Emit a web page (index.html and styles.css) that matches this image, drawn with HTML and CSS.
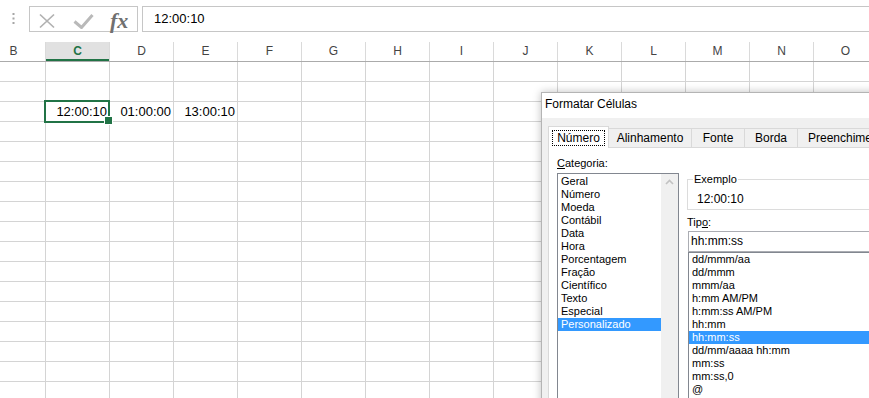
FILE: index.html
```html
<!DOCTYPE html>
<html lang="pt-BR">
<head>
    <meta charset="UTF-8">
    <meta name="viewport" content="width=device-width, initial-scale=1.0">
    <title>Formatar Células</title>
    <link rel="stylesheet" href="styles.css">
</head>
<body>
    <!-- Formula bar -->
    <div class="formula-bar">
        <div class="grip">
            <svg width="3" height="11" viewBox="0 0 3 11">
                <rect x="0.5" y="0" width="2" height="2" fill="#a6a6a6"/>
                <rect x="0.5" y="4.5" width="2" height="2" fill="#a6a6a6"/>
                <rect x="0.5" y="9" width="2" height="2" fill="#a6a6a6"/>
            </svg>
        </div>
        <div class="fx-tools">
            <svg class="tool-cancel" width="18" height="16" viewBox="0 0 18 16">
                <path d="M2 1.5 L16 14.5 M16 1.5 L2 14.5" stroke="#b1b1b1" stroke-width="1.7" fill="none"/>
            </svg>
            <svg class="tool-enter" width="21" height="16" viewBox="0 0 21 16">
                <path d="M1.5 8.5 L8.5 14.5 L19.5 2" stroke="#b9b9b9" stroke-width="3" fill="none"/>
            </svg>
            <span class="fx">fx</span>
        </div>
        <div class="formula-input">12:00:10</div>
    </div>

    <!-- Column headers -->
    <div class="col-headers">
        <div class="col-head">B</div>
        <div class="col-head active">C</div>
        <div class="col-head">D</div>
        <div class="col-head">E</div>
        <div class="col-head">F</div>
        <div class="col-head">G</div>
        <div class="col-head">H</div>
        <div class="col-head">I</div>
        <div class="col-head">J</div>
        <div class="col-head">K</div>
        <div class="col-head">L</div>
        <div class="col-head">M</div>
        <div class="col-head">N</div>
        <div class="col-head">O</div>
    </div>

    <!-- Cells -->
    <div class="grid">
        <div class="data-row">
            <div class="cell"></div>
            <div class="cell selected">12:00:10</div>
            <div class="cell">01:00:00</div>
            <div class="cell">13:00:10</div>
        </div>
    </div>

    <!-- Format Cells dialog -->
    <div class="dialog">
        <div class="dialog-title">Formatar Células</div>
        <div class="tabs">
            <div class="tab tab-numero active"><span class="focus">Número</span></div>
            <div class="tab tab-alinhamento">Alinhamento</div>
            <div class="tab tab-fonte">Fonte</div>
            <div class="tab tab-borda">Borda</div>
            <div class="tab tab-preench">Preenchimento</div>
        </div>
        <div class="tab-panel">
            <div class="category-col">
                <div class="label"><u>C</u>ategoria:</div>
                <div class="listbox category-list">
                    <ul class="items">
                        <li>Geral</li>
                        <li>Número</li>
                        <li>Moeda</li>
                        <li>Contábil</li>
                        <li>Data</li>
                        <li>Hora</li>
                        <li>Porcentagem</li>
                        <li>Fração</li>
                        <li>Científico</li>
                        <li>Texto</li>
                        <li>Especial</li>
                        <li class="selected">Personalizado</li>
                    </ul>
                    <div class="scrollbar">
                        <svg width="9" height="6" viewBox="0 0 9 6">
                            <path d="M1 5 L4.5 1.5 L8 5" stroke="#c2c2c2" stroke-width="1.6" fill="none"/>
                        </svg>
                    </div>
                </div>
            </div>
            <div class="type-col">
                <fieldset class="example">
                    <legend>Exemplo</legend>
                    <div class="example-value">12:00:10</div>
                </fieldset>
                <div class="label tipo-label">Tip<u>o</u>:</div>
                <div class="type-input">hh:mm:ss</div>
                <ul class="listbox type-list">
                    <li>dd/mmm/aa</li>
                    <li>dd/mmm</li>
                    <li>mmm/aa</li>
                    <li>h:mm AM/PM</li>
                    <li>h:mm:ss AM/PM</li>
                    <li>hh:mm</li>
                    <li class="selected">hh:mm:ss</li>
                    <li>dd/mm/aaaa hh:mm</li>
                    <li>mm:ss</li>
                    <li>mm:ss,0</li>
                    <li>@</li>
                </ul>
            </div>
        </div>
    </div>
</body>
</html>
```

FILE: styles.css
```css
* {
    box-sizing: border-box;
}
html, body {
    margin: 0;
    height: 100%;
    overflow: hidden;
}
body {
    font-family: "Liberation Sans", Arial, sans-serif;
    color: #000;
    background: #fff;
    position: relative;
}

/* formula bar */
.formula-bar {
    display: flex;
    height: 42px;
    padding-top: 6px;
}
.grip {
    width: 29px;
    padding: 7px 0 0 12px;
}
.grip svg {
    display: block;
}
.fx-tools {
    display: flex;
    align-items: center;
    width: 109px;
    height: 26px;
    border: 1px solid #c6c6c6;
    padding-top: 3px;
}
.tool-cancel {
    margin-left: 8px;
}
.tool-enter {
    margin-left: 17px;
}
.fx {
    margin-left: 16px;
    font-family: "Liberation Serif", "Times New Roman", serif;
    font-style: italic;
    font-weight: bold;
    font-size: 22px;
    color: #707070;
    line-height: 20px;
}
.formula-input {
    flex: 1;
    margin-left: 4px;
    margin-right: -10px;
    height: 26px;
    border: 1px solid #c6c6c6;
    padding-left: 11px;
    font-size: 13px;
    line-height: 24px;
}

/* column headers */
.col-headers {
    display: grid;
    grid-template-columns: repeat(14, 64px);
    margin-left: -18px;
    height: 20px;
    border-bottom: 1px solid #ababab;
}
.col-head {
    border-right: 1px solid #dadada;
    text-align: center;
    font-size: 12px;
    line-height: 19px;
    color: #444;
}
.col-head.active {
    background: #e1e1e1;
    color: #217346;
    font-weight: bold;
    box-shadow: inset 0 -2px 0 #217346;
}

/* cells */
.grid {
    margin-left: -18px;
    height: 340px;
    background-image:
        linear-gradient(to right, #d4d4d4 1px, transparent 1px),
        linear-gradient(to bottom, #d4d4d4 1px, transparent 1px);
    background-size: 64px 20px;
    background-position: 63px 19px;
    padding-top: 40px;
}
.data-row {
    display: grid;
    grid-template-columns: repeat(4, 64px);
    height: 20px;
}
.cell {
    text-align: right;
    padding-right: 3px;
    font-size: 13px;
    line-height: 19px;
}
.cell.selected {
    position: relative;
}
.cell.selected::after {
    content: "";
    position: absolute;
    left: -2px;
    top: -2px;
    right: 0;
    bottom: -1px;
    border: 2px solid #217346;
}
.cell.selected::before {
    content: "";
    position: absolute;
    right: -3px;
    bottom: -3px;
    width: 7px;
    height: 7px;
    background: #217346;
    border: 1px solid #fff;
    z-index: 1;
}

/* dialog */
.dialog {
    position: absolute;
    left: 541px;
    top: 92px;
    width: 420px;
    height: 340px;
    background: #f0f0f0;
    border: 1px solid #b4b4b4;
    box-shadow: 0 0 8px rgba(0, 0, 0, 0.25);
    font-size: 11px;
}
.dialog-title {
    height: 25px;
    background: #fff;
    font-size: 12px;
    line-height: 23px;
    padding-left: 3px;
}
.tabs {
    display: flex;
    align-items: flex-end;
    margin: 8px 0 0 6px;
    font-size: 12px;
}
.tab {
    height: 19px;
    line-height: 18px;
    border: 1px solid #d9d9d9;
    border-bottom: 0;
    margin-left: -1px;
    text-align: center;
    white-space: nowrap;
}
.tab:first-child {
    margin-left: 0;
}
.tab.active {
    height: 22px;
    margin-bottom: -1px;
    padding-top: 2px;
    background: #fff;
    position: relative;
    z-index: 1;
}
.focus {
    display: inline-block;
    border: 1px dotted #000;
    padding: 0 4px;
    line-height: 14px;
}
.tab-numero { width: 61px; }
.tab-alinhamento { width: 84px; }
.tab-fonte { width: 54px; }
.tab-borda { width: 54px; }
.tab-preench {
    text-align: left;
    padding: 0 10px;
}
.tab-panel {
    display: flex;
    margin-left: 6px;
    height: 300px;
    background: #fff;
    border: 1px solid #d9d9d9;
    padding: 8px 0 0 8px;
}
.label {
    line-height: 14px;
    height: 14px;
}
.category-col {
    width: 122px;
}
.listbox {
    border: 1px solid #828790;
    background: #fff;
    list-style: none;
    margin: 0;
    padding: 0;
}
.listbox ul, ul.listbox {
    list-style: none;
}
.listbox li {
    height: 13px;
    line-height: 13px;
    padding-left: 3px;
    white-space: nowrap;
}
.listbox li.selected {
    background: #3399ff;
    color: #fff;
}
.category-list {
    display: flex;
    margin-top: 3px;
    height: 240px;
}
.category-list .items {
    flex: 1;
    margin: 0;
    padding: 1px 0 0;
}
.scrollbar {
    width: 17px;
    background: #f0f0f0;
    display: flex;
    justify-content: center;
    padding-top: 5px;
}
.scrollbar svg {
    display: block;
}
.type-col {
    width: 220px;
    margin-left: 8px;
}
.example {
    margin: 16px 0 0;
    border: 1px solid #dcdcdc;
    padding: 6px 0 3px 9px;
    min-width: 0;
}
.example legend {
    margin-left: -4px;
    padding: 0 1px;
    line-height: 14px;
}
.example-value {
    font-size: 12px;
    line-height: 14px;
}
.tipo-label {
    margin-top: 5px;
}
.type-input {
    margin: 2px 0 0 1px;
    height: 21px;
    border: 1px solid #abadb3;
    padding-left: 2px;
    font-size: 12px;
    line-height: 19px;
}
.type-list {
    margin-left: 1px;
    height: 160px;
}
```
